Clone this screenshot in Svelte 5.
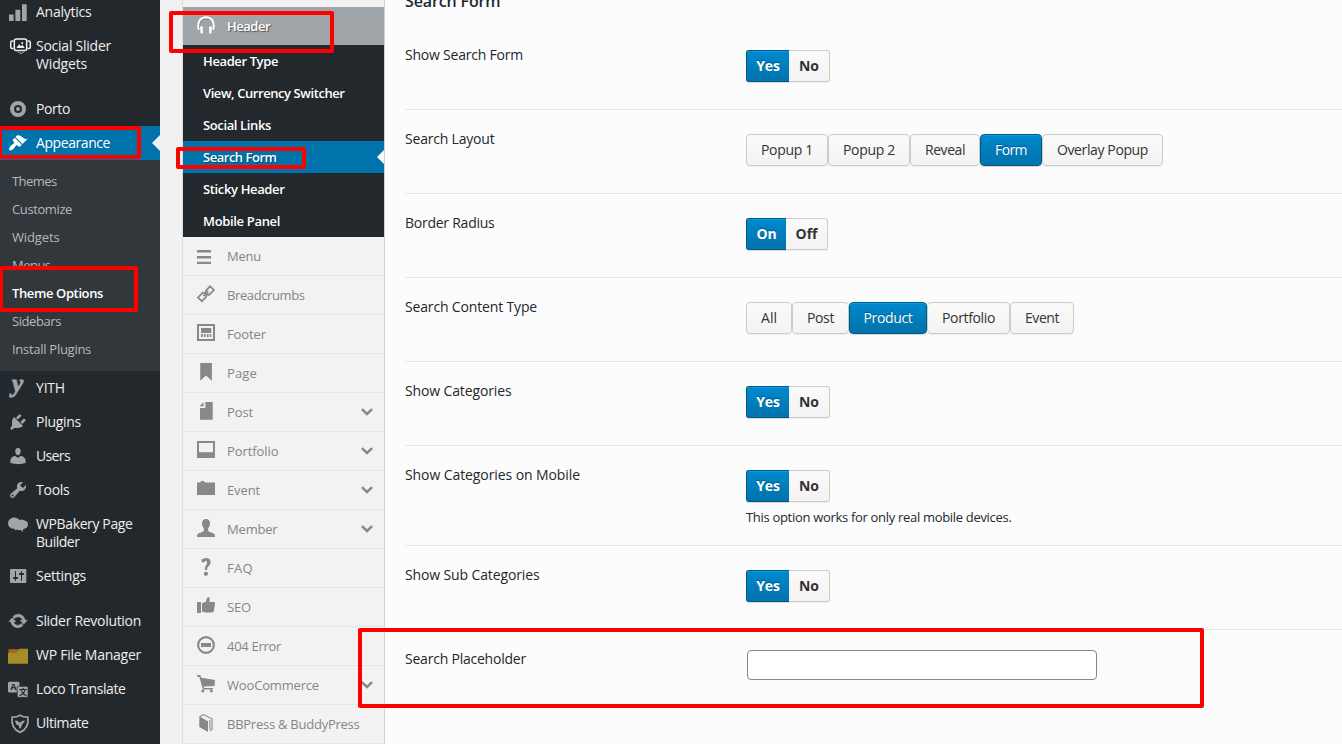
<script>
  // Spreads a label over the given width by adjusting its letter spacing.
  function fit(node, width) {
    const count = [...node.textContent].length;
    const natural = node.getBoundingClientRect().width;
    node.style.letterSpacing = `${(width - 0.5 - natural) / count}px`;
  }

  const mainMenu = [
    { icon: 'analytics', lines: [['Analytics', 56]] },
    { icon: 'slider', lines: [['Social Slider', 75.5], ['Widgets', 51.5]] },
    { separator: true },
    { icon: 'porto', lines: [['Porto', 34.5]] },
    {
      icon: 'appearance', lines: [['Appearance', 74.5]], current: true,
      sub: [
        ['Themes', 45], ['Customize', 60.5], ['Widgets', 48], ['Menus', 39],
        ['Theme Options', 91.5, true], ['Sidebars', 49.5], ['Install Plugins', 79.5]
      ]
    },
    { icon: 'yith', lines: [['YITH', 29.5]] },
    { icon: 'plugins', lines: [['Plugins', 45.5]] },
    { icon: 'users', lines: [['Users', 34.5]] },
    { icon: 'tools', lines: [['Tools', 34]] },
    { icon: 'bakery', lines: [['WPBakery Page', 97], ['Builder', 44]] },
    { icon: 'settings', lines: [['Settings', 50.5]] },
    { separator: true },
    { icon: 'revolution', lines: [['Slider Revolution', 105.5]] },
    { icon: 'files', lines: [['WP File Manager', 105.5]] },
    { icon: 'loco', lines: [['Loco Translate', 90]] },
    { icon: 'ultimate', lines: [['Ultimate', 53]] }
  ];

  const headerTabs = [
    ['Header Type', 75.5], ['View, Currency Switcher', 142], ['Social Links', 68.5],
    ['Search Form', 74], ['Sticky Header', 82], ['Mobile Panel', 77.5]
  ];

  const tabs = [
    ['menu', 'Menu', 34.5], ['link', 'Breadcrumbs', 78], ['footer', 'Footer', 39.5],
    ['page', 'Page', 30.5], ['post', 'Post', 26.5, true], ['portfolio', 'Portfolio', 52, true],
    ['event', 'Event', 33.5, true], ['member', 'Member', 51, true], ['faq', 'FAQ', 26.5],
    ['seo', 'SEO', 24.5], ['error', '404 Error', 54.5], ['cart', 'WooCommerce', 92.5, true],
    ['book', 'BBPress & BuddyPress', 133]
  ];

  const yesNo = [['Yes', 24, 43], ['No', 20.5, 41]];
  const rows = [
    { label: ['Show Search Form', 118.5], toggle: yesNo },
    {
      label: ['Search Layout', 90], active: 'Form',
      buttons: [['Popup 1', 52.5, 82], ['Popup 2', 52.5, 82], ['Reveal', 40.5, 70], ['Form', 32.5, 62], ['Overlay Popup', 91.5, 121]]
    },
    { label: ['Border Radius', 90], toggle: [['On', 20.5, 40], ['Off', 22.5, 42]] },
    {
      label: ['Search Content Type', 132.5], active: 'Product',
      buttons: [['All', 16.5, 46], ['Post', 27.5, 57], ['Product', 49.5, 78], ['Portfolio', 53.5, 83], ['Event', 34.5, 64]]
    },
    { label: ['Show Categories', 107], toggle: yesNo },
    { label: ['Show Categories on Mobile', 175.5], toggle: yesNo, note: ['This option works for only real mobile devices.', 266] },
    { label: ['Show Sub Categories', 135], toggle: yesNo },
    { label: ['Search Placeholder', 121.5], input: true }
  ];
</script>

<div class="page">
  <nav class="admin">
    {#each mainMenu as item}
      {#if item.separator}
        <div class="gap"></div>
      {:else}
        <div class="item" class:current={item.current}>
          <svg class="icon" viewBox="0 0 20 20" aria-hidden="true">
            {#if item.icon === 'analytics'}
              <path d="M1 12.5h4.6V19H1zM7.4 7.8h4.9V19H7.4zM14 2.2h4.7V19H14z" />
            {:else if item.icon === 'slider'}
              <g fill="none" stroke="#f0f0f1" stroke-width="1.5">
                <rect x="6.3" y="3" width="12.4" height="11.6" rx="2" />
                <path d="M5.5 5H4.1Q2.7 5 2.7 6.5v4.6q0 1.5 1.4 1.5h1.4M19.500 5h1.4q1.4 0 1.4 1.5v4.6q0 1.5-1.4 1.5h-1.4" />
              </g>
              <path fill="#f0f0f1" d="M8.5 12l2.6-3.8 1.8 2 1.5-1.5L16.7 12zM13.4 6.200h1.7v1.7h-1.7zM10.3 16h1v1h-1zm2 .7h1.2v1.2h-1.2zM14.5 16h1v1h-1z" />
            {:else if item.icon === 'porto'}
              <path fill-rule="evenodd" d="M10 2a8 8 0 1 0 0 16 8 8 0 0 0 0-16zm0 4a4 4 0 1 1 0 8 4 4 0 0 1 0-8z" /><circle cx="10" cy="10" r="1.9" />
            {:else if item.icon === 'appearance'}
              <path d="M14.480 11.060L7.410 3.990l1.500-1.500c.5-.56 2.300-.47 3.510.32 1.210.8 1.430 1.280 2.910 2.100 1.180.64 2.450 1.260 4.450.85zm-.71.71L6.700 4.700 4.930 6.470c-.39.39-.39 1.020 0 1.410l1.060 1.060c.39.39.39 1.030 0 1.420-.6.6-1.430 1.110-2.210 1.690-.35.26-.7.53-1.010.84C1.430 14.230.4 16.080 1.400 17.070c.99 1 2.840-.03 4.180-1.360.31-.31.58-.66.85-1.020.57-.78 1.080-1.610 1.690-2.210.39-.39 1.020-.39 1.410 0l1.060 1.060c.39.39 1.020.39 1.410 0z" />
            {:else if item.icon === 'yith'}
              <text class="script-mark" x="4" y="14.2">y</text>
            {:else if item.icon === 'plugins'}
              <path d="M13.110 4.360L9.870 7.600 8 5.730l3.240-3.240c.35-.34 1.050-.2 1.560.32.52.51.66 1.210.31 1.550zm-8 1.770l.91-1.120 9.010 9.010-1.190.84c-.71.71-2.630 1.160-3.820 1.160H6.140L4.900 17.260c-.59.59-1.540.59-2.120 0-.59-.58-.59-1.530 0-2.120l1.240-1.240v-3.880c0-1.130.4-3.190 1.090-3.890zm7.260 3.970l3.240-3.240c.34-.35 1.040-.21 1.550.31.52.51.66 1.210.31 1.550l-3.240 3.250z" />
            {:else if item.icon === 'users'}
              <path d="M10 9.250c-2.270 0-2.730-3.440-2.730-3.440C7 4.020 7.820 2 9.970 2c2.160 0 2.980 2.020 2.710 3.810 0 0-.41 3.440-2.680 3.440zm0 2.570L12.720 10c2.390 0 4.920 2.330 4.920 4.530v2.490s-4.050 1.130-7.640 1.130c-3.650 0-7.640-1.130-7.640-1.130v-2.490c0-2.250 2.340-4.480 4.870-4.480z" />
            {:else if item.icon === 'tools'}
              <path fill-rule="evenodd" d="M16.680 9.770c-1.340 1.340-3.300 1.670-4.950.99l-5.410 6.520c-.99.99-2.590.99-3.580 0s-.99-2.590 0-3.570l6.520-5.420c-.68-1.650-.35-3.610.99-4.950 1.280-1.280 3.120-1.620 4.720-1.060l-2.890 2.890 2.820 2.820 2.860-2.870c.53 1.580.18 3.390-1.080 4.650zM3.810 16.210c.4.39 1.040.39 1.430 0 .4-.4.4-1.040 0-1.430-.39-.4-1.030-.4-1.430 0-.39.39-.39 1.030 0 1.430z" />
            {:else if item.icon === 'bakery'}
              <path d="M6.300 3.400c2.200 0 4.100 1.100 5.100 2.700 1.200-.8 3-.7 4.300.1 2.700.1 4.500 2 4.300 4.600-.2 2.500-2.300 4.200-4.700 4.100l-.6 3.100-1.600-1.900c-1.400.5-3 .3-4.200-.5l-2.400.8.4-1.600C2.900 15 0 12.600 0 9.200c0-3.200 2.900-5.800 6.300-5.800z" />
            {:else if item.icon === 'settings'}
              <path fill-rule="evenodd" d="M18.300 16V4c0-.55-.45-1-1-1H3c-.55 0-1 .45-1 1v12c0 .55.45 1 1 1h14.300c.55 0 1-.45 1-1zM8 11h1c.55 0 1 .45 1 1s-.45 1-1 1H8v1.500c0 .28-.22.5-.5.5s-.5-.22-.5-.5V13H6c-.55 0-1-.45-1-1s.45-1 1-1h1V5.500c0-.28.22-.5.5-.5s.5.22.5.5V11zm5-2h-1c-.55 0-1-.45-1-1s.45-1 1-1h1V5.500c0-.28.22-.5.5-.5s.5.22.5.5V7h1c.55 0 1 .45 1 1s-.45 1-1 1h-1v5.500c0 .28-.22.5-.5.5s-.5-.22-.5-.5V9z" />
            {:else if item.icon === 'revolution'}
              <path stroke="#a0a5aa" stroke-width=".5" d="M10.200 3.280c3.530 0 6.430 2.610 6.920 6h2.080l-3.500 4-3.500-4h2.320c-.45-1.970-2.210-3.450-4.320-3.450-1.450 0-2.730.71-3.540 1.780L4.950 5.660C6.230 4.200 8.110 3.280 10.200 3.280zm-.4 13.440c-3.520 0-6.430-2.610-6.920-6H.8l3.500-4c1.170 1.330 2.330 2.670 3.500 4H5.480c.45 1.970 2.210 3.450 4.320 3.450 1.450 0 2.730-.71 3.540-1.780l1.710 1.950c-1.280 1.460-3.150 2.380-5.250 2.380z" />
            {:else if item.icon === 'files'}
              <path fill="#a8641f" d="M.5 4.200h9.200v4H.5z" />
              <path fill="#a78d25" d="M0 8h8.300l2-3.400q.6-.8 1.500-.8H19q1 0 1 1v12.900q0 1-1 1H1q-1 0-1-1z" />
            {:else if item.icon === 'loco'}
              <rect x="0" y="2.700" width="11.500" height="10.800" rx="1.600" />
              <text class="tile-mark" x="2.200" y="11.200">A</text>
              <rect x="9.100" y="7.200" width="11" height="11.300" rx="1.600" stroke="#23282d" stroke-width=".8" />
              <text class="tile-mark cjk" x="10.900" y="16.200">文</text>
            {:else}
              <path fill="none" stroke="#a0a5aa" stroke-width="1.700" d="M12 2.200C9.800 3.700 7 4.200 4.100 4.200c-.7 6.300 1.200 12.500 7.900 15.200 6.700-2.700 8.600-8.900 7.900-15.200-2.900 0-5.700-.5-7.900-2z" />
              <path d="M6.800 7.800h3l.8 1.400h2.600l.8-1.400h3.200L14 11.800l-1.300 3.600-1.400-.2-.4-2.800-2.300-.6z" />
            {/if}
          </svg>
          <div class="name">
            {#each item.lines as [text, width]}
              <div><span class="fit" use:fit={width}>{text}</span></div>
            {/each}
          </div>
        </div>
        {#if item.sub}
          <div class="submenu">
            {#each item.sub as [text, width, selected]}
              <div class="subitem" class:selected><span class="fit" use:fit={width}>{text}</span></div>
            {/each}
          </div>
        {/if}
      {/if}
    {/each}
  </nav>

  <aside class="options">
    <div class="tab head">
      <svg class="glyph" viewBox="0 0 18 18" aria-hidden="true">
        <path fill="none" stroke="#555" stroke-opacity=".5" stroke-width="2" d="M2.300 14.500C1 10 1.500 3 9.300 2.300 17.300 3 17.700 10 16.300 14.500" />
        <path fill="none" stroke="#fff" stroke-width="2" d="M1.800 14C.3 9 1.200 1.800 9 1.300 16.800 1.800 17.700 9 16.200 14" />
        <path fill="#fff" d="M3 10.500h2.800v7H3.600zM12.200 10.500H15l-.6 7h-2.200z" />
      </svg>
      <span class="fit" use:fit={43.5}>Header</span>
    </div>
    <div class="subtabs">
      {#each headerTabs as [text, width]}
        <div class="subtab" class:open={text === 'Search Form'}><span class="fit" use:fit={width}>{text}</span></div>
      {/each}
    </div>
    {#each tabs as [icon, text, width, expands]}
      <div class="tab">
        <svg class="glyph" viewBox="0 0 18 18" aria-hidden="true">
          {#if icon === 'menu'}
            <path d="M0 4h14v2.600H0zM0 10h14v2.600H0zM0 15.800h14v2.200H0z" />
          {:else if icon === 'link'}
            <g fill="none" stroke="#888" stroke-width="1.700">
              <path d="M8.700 5.800l4.300-4.500 3.900 3.700-4.800 4.900-3.400-1.300zM9.200 11.800L4.900 16.200 1 12.500l4.800-4.900 3.400 1.400zM6.400 11.200l5-5.200" />
            </g>
          {:else if icon === 'footer'}
            <path fill-rule="evenodd" d="M0 0h18v17H0zM2 2v13h14V2z" /><path d="M4 4h10.300v5H4zM4 10h1.900v3H4zM7 10h1.700v3H7zM9.900 10h1.700v3H9.900zM12.700 10h1.600v3h-1.600z" />
          {:else if icon === 'page'}
            <path d="M3.200 0h11.700v17.800L9 12.400 3.200 17.800z" />
          {:else if icon === 'post'}
            <path d="M8.300 0h7.400v17.800H3V6h5.300zM6.500 0v4.200H2.600z" />
          {:else if icon === 'portfolio'}
            <path fill-rule="evenodd" d="M0 0h18v17H0zM2 2v9.200h14V2z" />
          {:else if icon === 'event'}
            <path d="M0 2.500h3.200Q3.800.8 5.500.8T7.900 2.500H18V15H0z" />
          {:else if icon === 'member'}
            <path d="M9 0c2.700 0 4.200 1.800 4 4.500-.1 2-.9 3.500-1.800 4.800v2.400c.7 1.200 2.400 1.700 4.300 2.300 1.700.6 2.500 1.400 2.500 4H0c0-2.600.8-3.400 2.500-4 1.900-.6 3.600-1.100 4.300-2.300V9.300C5.900 8 5.100 6.500 5 4.500 4.800 1.800 6.300 0 9 0z" />
          {:else if icon === 'faq'}
            <path d="M4.600 1.500C6 .5 7.500 0 9.100 0c2.700 0 4.500 1.600 4.500 4.200 0 2-1.100 3.300-2.300 4.400-1 .9-1.200 1.800-1.200 3.400H7.900c-.1-2.100.2-3.600 1.300-4.900 1.300-1.500 1.200-4.300-1-4.300-.3 1.500-1.400 2-2.600 1.500-.9-.4-1.300-1.800-1-2.400z" /><circle cx="8.900" cy="15.800" r="2.100" />
          {:else if icon === 'seo'}
            <path d="M0 5h4v11H0zM5 6.200l3.800-1.500L10.200.8c.6-1.200 2.800-.7 2.600 1.200L12.500 5H17c.8 0 1.100.7 1 1.500l-1.100 7.300c-.2 1.100-.9 1.700-2 1.700H8.500L5 14.500z" />
          {:else if icon === 'error'}
            <circle cx="9" cy="9" r="7.900" fill="none" stroke="#888" stroke-width="2.100" /><path d="M4 7h10v4H4z" />
          {:else if icon === 'cart'}
            <path d="M0 0h3.300l1 2.700L18 5l-.5 6-11 .6.7 1.300h8.700v1.500H5.900L2.300 1.800H0z" /><circle cx="5.900" cy="15.900" r="1.500" /><circle cx="14.400" cy="15.900" r="1.500" />
          {:else}
            <path d="M2.300 2.600l8.700 4.600v10.800L2.300 13z" /><path fill="none" stroke="#888" stroke-width="1.100" d="M2.800 2.700L6.200.6l8.800 4.200v10.400l-2.300 1.600M12.800 6v9" />
          {/if}
        </svg>
        <span class="fit" use:fit={width}>{text}</span>
        {#if expands}
          <svg class="chevron" viewBox="0 0 12 8" aria-hidden="true"><path d="M.9 1.200L6 6l5.100-4.800" /></svg>
        {/if}
      </div>
    {/each}
  </aside>

  <main>
    <h2><span class="fit" use:fit={96}>Search Form</span></h2>
    {#each rows as row}
      <div class="row" class:tall={row.note}>
        <div class="label"><span class="fit" use:fit={row.label[1]}>{row.label[0]}</span></div>
        <div class="field">
          {#if row.toggle}
            <div class="toggle">
              {#each row.toggle as [text, width, size], i}
                <button class:on={i === 0} style:width="{size}px"><span class="fit" use:fit={width}>{text}</span></button>
              {/each}
            </div>
          {:else if row.buttons}
            <div class="set">
              {#each row.buttons as [text, width, size]}
                <button class:on={text === row.active} style:width="{size}px"><span class="fit" use:fit={width}>{text}</span></button>
              {/each}
            </div>
          {:else}
            <input type="text" aria-label={row.label[0]} />
          {/if}
          {#if row.note}
            <div class="note"><span class="fit" use:fit={row.note[1]}>{row.note[0]}</span></div>
          {/if}
        </div>
      </div>
    {/each}
  </main>

  <div class="mark mark-header"></div>
  <div class="mark mark-search"></div>
  <div class="mark mark-appearance"></div>
  <div class="mark mark-theme"></div>
  <div class="mark mark-placeholder"></div>
</div>

<style>
  :global(body) { margin: 0; overflow: hidden; }
  .page {
    position: relative; display: flex; width: 1342px; height: 744px; overflow: hidden;
    background: #f1f1f1; color: #23282d; font-family: "Open Sans", "Noto Sans", sans-serif;
  }
  .fit { display: inline-block; white-space: nowrap; }

  .admin { flex: 0 0 160px; height: 749px; margin-top: -5px; background: #23282d; color: #eee; font-size: 14px; line-height: 18px; }
  .gap { height: 11px; }
  .item { position: relative; display: flex; gap: 8px; padding: 8px 0 8px 8px; }
  .icon { flex: none; width: 20px; height: 20px; margin: -1px 0; fill: #a0a5aa; overflow: visible; }
  .item.current { background: #0073aa; color: #fff; }
  .item.current .icon { fill: #fff; }
  .item.current::after {
    content: ""; position: absolute; right: 0; top: 9px;
    border: 8px solid transparent; border-left: 0; border-right-color: #f1f1f1;
  }
  .script-mark { font: italic bold 25px "Liberation Serif", serif; stroke: #a0a5aa; stroke-width: .9; }
  .tile-mark { font: bold 9px "Open Sans", sans-serif; fill: #23282d; }
  .tile-mark.cjk { font: bold 8px "Noto Sans CJK SC", sans-serif; }
  .submenu { padding: 7px 0 8px 12px; background: #32373c; color: #b4b9be; font-size: 13px; }
  .subitem { height: 28px; line-height: 28px; }
  .subitem.selected { color: #fff; font-weight: 600; }

  .options {
    flex: 0 0 201px; height: 744px; margin-left: 22px; padding-top: 7px; box-sizing: content-box; overflow: hidden;
    border-left: 1px solid #ddd; border-right: 1px solid #d5d5d5; background: #f2f2f2;
    color: #858585; font-size: 13px; font-weight: 500;
  }
  .tab { display: flex; align-items: flex-start; height: 38px; padding-left: 14px; border-bottom: 1px solid #e5e5e5; line-height: 38px; }
  .glyph { flex: none; width: 18px; height: 18px; margin: 9px 12px 0 0; fill: #888; overflow: visible; }
  .chevron { width: 12px; height: 8px; margin: 15px 11px 0 auto; fill: none; stroke: #888; stroke-width: 2.5; overflow: visible; }
  .tab.head { border-bottom: 0; background: #a0a5aa; color: #fff; font-weight: 600; text-shadow: 1px 1px 1px rgba(0, 0, 0, .5); }
  .subtabs { background: #23282d; color: #fff; font-weight: 600; }
  .subtab { position: relative; height: 32px; padding-left: 20px; line-height: 32px; }
  .subtab.open { background: #0073aa; text-shadow: 1px 1px 1px rgba(0, 0, 0, .4); }
  .subtab.open::after {
    content: ""; position: absolute; right: 0; top: 9px;
    border: 7px solid transparent; border-left: 0; border-right-color: #fcfcfc;
  }

  main { flex: 1; height: 744px; padding-left: 20px; overflow: hidden; background: #fcfcfc; }
  h2 { height: 24px; margin: -11px 0 13px; font-size: 16px; font-weight: 600; line-height: 24px; }
  .row { display: grid; grid-template-columns: 341px 1fr; box-sizing: border-box; height: 84px; border-bottom: 1px solid #e7e7e7; }
  .row.tall { height: 100px; }
  .row:last-child { border-bottom: 0; }
  .label { padding-top: 20px; font-size: 14px; line-height: 18px; }
  .field { padding-top: 24px; }
  .toggle, .set { display: flex; }
  button {
    display: flex; align-items: center; justify-content: center; box-sizing: border-box; height: 32px; padding: 0;
    border: 1px solid #ccc; border-radius: 4px; background: linear-gradient(#fafafa, #f3f3f3); box-shadow: 0 1px 1px rgba(0, 0, 0, .06);
    color: #333; font: 400 14px/18px "Open Sans", "Noto Sans", sans-serif;
  }
  .toggle button { border-radius: 0 3px 3px 0; border-left: 0; font-weight: 700; }
  .toggle .on { border-right: 0; border-left: 1px solid #005a87; border-radius: 3px 0 0 3px; }
  button.on {
    border-color: #005a87; background: linear-gradient(#0089cf, #0073aa); color: #fff;
    box-shadow: inset 0 1px 0 #0c9be6, 0 1px 1px rgba(0, 0, 0, .15); text-shadow: 0 -1px 1px rgba(0, 70, 110, .7);
  }
  .note { margin-top: 6px; font-size: 13px; line-height: 18px; }
  input {
    display: block; box-sizing: border-box; width: 350px; height: 30px; margin: -4px 0 0 1px; padding: 0 8px;
    border: 1px solid #7e8993; border-radius: 4px; background: #fff;
  }

  .mark { position: absolute; box-sizing: border-box; border: 4px solid #f00; border-radius: 2px; }
  .mark-header { left: 169px; top: 11px; width: 165px; height: 42px; }
  .mark-search { left: 176px; top: 147px; width: 130px; height: 22px; }
  .mark-appearance { left: -2px; top: 126px; width: 143px; height: 33px; }
  .mark-theme { left: -1px; top: 266px; width: 139px; height: 46px; }
  .mark-placeholder { left: 358px; top: 628px; width: 846px; height: 80px; }
</style>
